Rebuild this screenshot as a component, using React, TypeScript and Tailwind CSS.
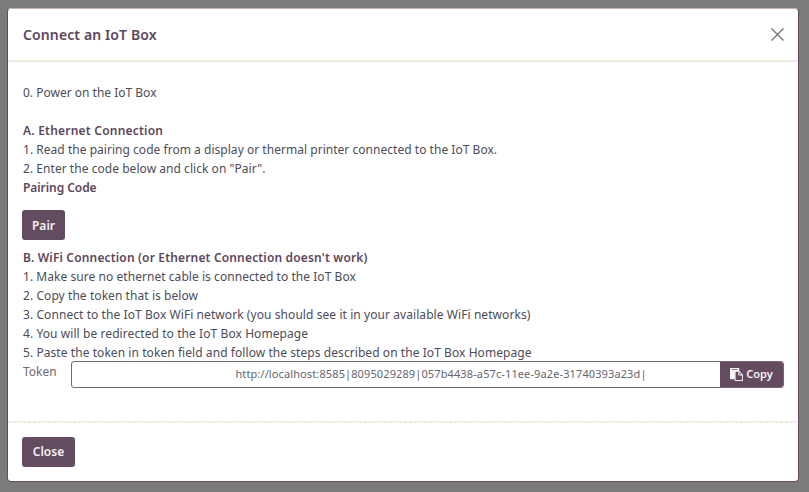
import type { ReactNode } from "react";

function Line({ children, className = "" }: { children?: ReactNode; className?: string }) {
  return <div className={`h-[19px] leading-[21px] whitespace-pre ${className}`}>{children}</div>;
}

function PasteIcon() {
  return (
    <svg className="size-[13px]" viewBox="0 0 1792 1792" fill="currentColor">
      <path d="M768 1664h896v-640h-416q-40 0-68-28t-28-68v-416h-384v1152zm256-1440v-64q0-13-9.500-22.500t-22.500-9.500h-704q-13 0-22.500 9.500t-9.500 22.500v64q0 13 9.500 22.500t22.500 9.500h704q13 0 22.500-9.500t9.500-22.500zm256 672h299l-299-299v299zm512 128v672q0 40-28 68t-68 28h-960q-40 0-68-28t-28-68v-160h-544q-40 0-68-28t-28-68v-1344q0-40 28-68t68-28h1088q40 0 68 28t28 68v328q21 13 36 28l408 408q28 28 48 76t20 88z" />
    </svg>
  );
}

const button = "flex items-center justify-center bg-[#644c60] font-semibold text-[#f7f2f5]";
const heading = "font-semibold text-[#5c475c]";

export default function App() {
  return (
    <div className="h-[492px] w-[809px] bg-[#7b7b7b] pt-2 pl-[7px] font-['Noto_Sans',sans-serif] text-[12px] text-[#4d4c59]">
      <div className="flex h-[474px] w-[792px] flex-col rounded-[4px] border border-t-[#c9b0aa] border-r-[#644c60] border-b-[#644c60] border-l-[#644c60] bg-white">
        <header className="flex h-[53px] shrink-0 items-center justify-between border-b-2 border-[#f1ebdf] pr-[14px] pl-[15px]">
          <h1 className="text-[14px] font-semibold tracking-[0.12px] text-[#5c475c]">Connect an IoT Box</h1>
          <svg className="size-[13px]" viewBox="0 0 13 13" fill="none" stroke="#77717b" strokeWidth="1.4">
            <path d="M.5.5l12 12M12.5.5l-12 12" />
          </svg>
        </header>
        <main className="h-[360px] shrink-0 border-b border-[#f1ebdf] pt-5 pl-[15px]">
          <Line>0. Power on the IoT Box</Line>
          <Line />
          <Line className={`${heading} tracking-[0.22px]`}>A. Ethernet Connection</Line>
          <Line className="tracking-[0.03px]">1. Read the pairing code from a display or thermal printer connected to the IoT Box.</Line>
          <Line className="tracking-[0.045px]">2. Enter the code below and click on "Pair".</Line>
          <Line className={`${heading} tracking-[-0.06px]`}>Pairing Code</Line>
          <button className={`${button} mt-[14px] mb-[7px] -ml-px h-[30px] w-[43px] rounded-[3px] pt-0.5`}>Pair</button>
          <Line className={`${heading} tracking-[0.165px]`}>B. WiFi Connection (or Ethernet Connection doesn't work)</Line>
          <Line className="tracking-[0.05px]">1. Make sure no ethernet cable is connected to the IoT Box</Line>
          <Line className="tracking-[0.07px]">2. Copy the token that is below</Line>
          <Line className="tracking-[0.073px]">3. Connect to the IoT Box WiFi network (you should see it in your available WiFi networks)</Line>
          <Line className="tracking-[0.08px]">4. You will be redirected to the IoT Box Homepage</Line>
          <Line className="tracking-[0.066px]">5. Paste the token in token field and follow the steps described on the IoT Box Homepage</Line>
          <div className="flex">
            <Line className="w-12 text-[#6b6a74]">Token</Line>
            <div className="flex h-[27px] w-[713px] overflow-hidden rounded-[3px] border border-[#76667a]">
              <div className="flex flex-1 items-center justify-center pl-[90px] text-[11px] tracking-[0.115px] whitespace-pre text-[#66656f]">http://localhost:8585|8095029289|057b4438-a57c-11ee-9a2e-31740393a23d|</div>
              <button className={`${button} w-[63px] gap-[3px] text-[11px]`}>
                <PasteIcon />
                Copy
              </button>
            </div>
          </div>
        </main>
        <footer className="flex flex-1 items-center border-t border-dashed border-[#efe9de] pl-[14px]">
          <button className={`${button} h-[30px] w-[53px] rounded-[3px]`}>Close</button>
        </footer>
      </div>
    </div>
  );
}
